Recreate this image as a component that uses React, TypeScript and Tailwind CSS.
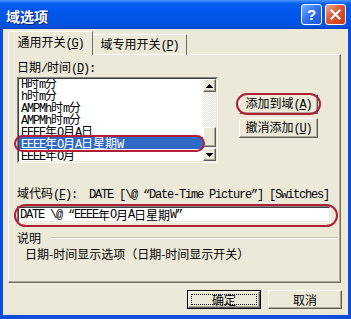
import type { ReactNode } from "react";

const CJK = /([\u3000-\u9fff\uff00-\uffef]+)/;
const MONO = "font-['Liberation_Mono',monospace] tracking-[-1.2px]";

function Txt({ s }: { s: string }) {
  return (
    <>
      {s.split(CJK).map((p, i) =>
        !p ? null : CJK.test(p) ? (
          <span key={i} className="font-['Noto_Sans_CJK_SC',sans-serif] tracking-normal">
            {p}
          </span>
        ) : (
          <span key={i} className={MONO}>
            {p}
          </span>
        )
      )}
    </>
  );
}

// label with an underlined accelerator key, e.g. 通用开关(G)
function Acc({ s, k, after = "" }: { s: string; k: string; after?: string }) {
  return (
    <span className="whitespace-pre">
      <Txt s={s + "("} />
      <span className={`${MONO} underline underline-offset-1`}>{k}</span>
      <Txt s={")" + after} />
    </span>
  );
}

function Raised({ children, className = "" }: { children: ReactNode; className?: string }) {
  return (
    <div
      className={`bg-[#ece9d8] border border-t-white border-l-white border-r-[#5f5d55] border-b-[#5f5d55] shadow-[inset_-1px_-1px_0_#aca899] flex items-center justify-center ${className}`}
    >
      {children}
    </div>
  );
}

function Arrow({ up }: { up?: boolean }) {
  return (
    <svg width="7" height="4" viewBox="0 0 7 4" className={up ? "" : "rotate-180"}>
      <path d="M3 0h1v1h1v1h1v1h1v1H0V3h1V2h1V1h1z" fill="#000" />
    </svg>
  );
}

export default function App() {
  const items = [
    "H时m分",
    "h时m分",
    "AMPMh时m分",
    "AMPMh时m分",
    "EEEE年O月A日",
    "EEEE年O月A日星期W",
    "EEEE年O月",
  ];

  return (
    <div className="w-[351px] h-[319px] bg-[#0a4edc] flex flex-col text-[12px] leading-[12px] text-black overflow-hidden">
      {/* Title bar */}
      <div className="h-[29px] shrink-0 flex items-center pl-[6px] pr-[5px] bg-[linear-gradient(#4a98fa_0%,#0a60f0_12%,#0058ee_30%,#0055e6_70%,#0050da_92%,#0042c0_100%)]">
        <span className="mt-[2px] text-white font-bold text-[14px] leading-[14px] font-['Noto_Sans_CJK_SC',sans-serif] [text-shadow:1px_1px_0_#0a1e6e]">
          域选项
        </span>
        <div className="ml-auto flex gap-[3px]">
          <div className="w-[21px] h-[21px] rounded-[3px] border border-white bg-[linear-gradient(135deg,#7aaeff,#2f70f2_50%,#1b55d6)] flex items-center justify-center text-white font-bold text-[15px] leading-[15px] font-['Liberation_Sans',sans-serif]">
            ?
          </div>
          <div className="w-[21px] h-[21px] rounded-[3px] border border-white bg-[linear-gradient(135deg,#f3a88c,#e0562f_45%,#c63c17)] flex items-center justify-center">
            <svg width="11" height="11" viewBox="0 0 11 11">
              <path d="M1.5 1.5l8 8M9.5 1.5l-8 8" stroke="#fff" strokeWidth="2.2" strokeLinecap="square" />
            </svg>
          </div>
        </div>
      </div>

      {/* Dialog body */}
      <div className="flex-1 mx-[3px] mb-[4px] bg-[#ece9d8] flex flex-col pl-[5px] pr-[6px]">
        {/* Tabs */}
        <div className="flex items-end h-[24px] mt-[2px] -mb-[1px] relative z-10">
          <div className="h-[24px] w-[85px] bg-[#ece9d8] border-t border-l border-white border-r border-r-[#716f64] flex items-center justify-center pb-[1px]">
            <Acc s="通用开关" k="G" />
          </div>
          <div className="h-[21px] w-[94px] border-t border-white border-r border-r-[#716f64] flex items-center justify-center pb-[1px]">
            <Acc s="域专用开关" k="P" />
          </div>
        </div>

        {/* Tab panel */}
        <div className="h-[229px] mr-[1px] border border-t-white border-l-white border-r-[#716f64] border-b-[#716f64] shadow-[inset_-1px_-1px_0_#aca899] pl-[8px] pr-[3px] flex flex-col">
          <div className="mt-[6px] h-[12px]">
            <Acc s="日期/时间" k="D" after=":" />
          </div>

          <div className="mt-[4px] flex">
            {/* List box */}
            <div className="relative w-[201px] h-[86px] border border-t-[#808080] border-l-[#808080] border-r-white border-b-white">
              <div className="h-full border border-t-[#404040] border-l-[#404040] border-r-[#ece9d8] border-b-[#ece9d8] bg-white flex">
                <div className="flex-1 overflow-hidden">
                  <div className="-mt-[2px]">
                    {items.map((t, i) => (
                      <div
                        key={i}
                        className={`h-[12px] leading-[12px] pl-[2px] whitespace-pre ${i === 5 ? "bg-[#316ac5] text-white" : ""}`}
                      >
                        <Txt s={t} />
                      </div>
                    ))}
                  </div>
                </div>
                {/* Scrollbar */}
                <div className="w-[13px] flex flex-col">
                  <Raised className="h-[13px]">
                    <Arrow up />
                  </Raised>
                  <div className="flex-1 flex flex-col justify-end bg-[repeating-conic-gradient(#ffffff_0_25%,#e6e3d6_0_50%)] bg-[length:2px_2px]">
                    <Raised className="h-[20px] mb-[1px]">{null}</Raised>
                  </div>
                  <Raised className="h-[13px]">
                    <Arrow />
                  </Raised>
                </div>
              </div>
              <div className="absolute left-[-4px] top-[57px] w-[191px] h-[17px] border-2 border-[#b01f36] rounded-full" />
            </div>

            {/* Side buttons */}
            <div className="ml-[21px] pt-[17px] flex flex-col gap-[4px]">
              <div className="relative">
                <Raised className="w-[79px] h-[20px]">
                  <Acc s="添加到域" k="A" />
                </Raised>
                <div className="absolute left-[-3px] top-[-1px] w-[85px] h-[22px] border-2 border-[#b01f36] rounded-full" />
              </div>
              <Raised className="w-[79px] h-[20px]">
                <Acc s="撤消添加" k="U" />
              </Raised>
            </div>
          </div>

          <div className="mt-[24px] h-[12px] whitespace-pre">
            <Acc s="域代码" k="F" after=":  DATE [\@ “Date-Time Picture”] [Switches]" />
          </div>

          {/* Field code input */}
          <div className="relative mt-[7px] w-[314px] h-[17px] border border-t-[#808080] border-l-[#808080] border-r-white border-b-white">
            <div className="h-full border border-t-[#404040] border-l-[#404040] border-r-[#ece9d8] border-b-[#ece9d8] bg-white pl-[1px] flex items-center whitespace-pre">
              <Txt s="DATE \@ “EEEE年O月A日星期W”" />
            </div>
            <div className="absolute left-[-4px] top-[-3px] w-[324px] h-[23px] border-2 border-[#b01f36] rounded-full" />
          </div>

          {/* Description group */}
          <div className="mt-[9px] flex items-center h-[12px]">
            <span className="font-['Noto_Sans_CJK_SC',sans-serif]">说明</span>
            <div className="flex-1 ml-[10px] h-[2px] border-t border-t-[#c5c2b2] border-b border-b-white" />
          </div>
          <div className="mt-[4px] ml-[8px] font-['Noto_Sans_CJK_SC',sans-serif] text-[12px] leading-[12px]">
            日期-时间显示选项（日期-时间显示开关）
          </div>
        </div>

        {/* Dialog buttons */}
        <div className="mt-[7px] flex justify-end gap-[7px]">
          <div className="w-[74px] h-[19px] border border-black">
            <Raised className="h-full p-[2px]">
              <div className="w-full h-full border border-dotted border-black flex items-center justify-center font-['Noto_Sans_CJK_SC',sans-serif]">
                确定
              </div>
            </Raised>
          </div>
          <Raised className="w-[74px] h-[19px] font-['Noto_Sans_CJK_SC',sans-serif]">取消</Raised>
        </div>
      </div>
    </div>
  );
}
